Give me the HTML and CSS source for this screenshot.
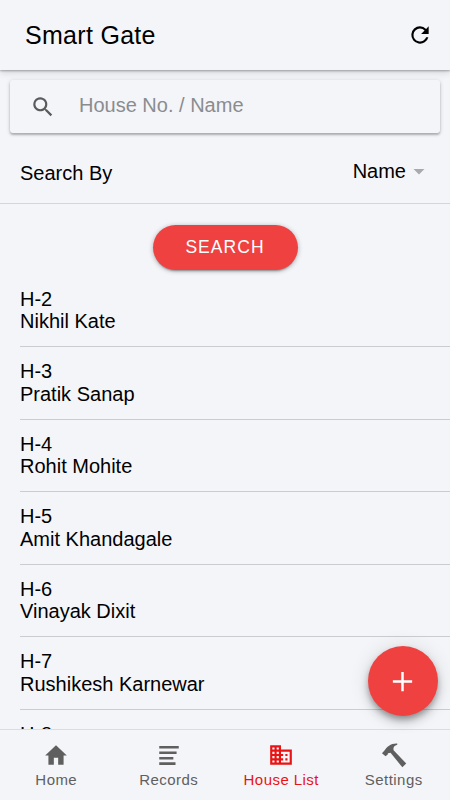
FILE: index.html
```html
<!DOCTYPE html>
<html lang="en">
<head>
  <meta charset="UTF-8">
  <meta name="viewport" content="width=device-width, initial-scale=1">
  <title>Smart Gate</title>
  <link rel="stylesheet" href="styles.css">
</head>
<body>
  <header class="toolbar">
    <h1 class="title">Smart Gate</h1>
    <button class="refresh" aria-label="Refresh">
      <svg viewBox="0 0 24 24"><path d="M17.65 6.35A7.95 7.95 0 0 0 12 4a8 8 0 1 0 7.73 10h-2.08A6 6 0 1 1 12 6c1.66 0 3.14.69 4.22 1.78L13 11h7V4z"/></svg>
    </button>
  </header>

  <main class="content">
    <div class="searchbar">
      <svg class="search-icon" viewBox="0 0 24 24"><path d="M15.5 14h-.79l-.28-.27A6.5 6.5 0 1 0 13.73 14.43l.27.28v.79l5 5L20.49 19zM9.5 14a4.5 4.5 0 1 1 0-9 4.5 4.5 0 0 1 0 9z"/></svg>
      <input class="search-input" type="text" placeholder="House No. / Name">
    </div>

    <div class="search-by">
      <span>Search By</span>
      <div class="select">Name<i class="arrow"></i></div>
    </div>

    <button class="search-btn">SEARCH</button>

    <ul class="house-list">
      <li>H-2<br>Nikhil Kate</li>
      <li>H-3<br>Pratik Sanap</li>
      <li>H-4<br>Rohit Mohite</li>
      <li>H-5<br>Amit Khandagale</li>
      <li>H-6<br>Vinayak Dixit</li>
      <li>H-7<br>Rushikesh Karnewar</li>
      <li>H-8</li>
    </ul>
  </main>

  <button class="fab" aria-label="Add house">
    <svg viewBox="0 0 24 24"><path d="M19 12.9h-6.1V19h-1.8v-6.1H5v-1.8h6.1V5h1.8v6.1H19z"/></svg>
  </button>

  <nav class="tabs">
    <a class="tab">
      <svg viewBox="0 0 24 24"><path d="M10 21v-6.5h4V21h5v-8.5h3L12 3 2 12.500h3V21z"/></svg>
      <span>Home</span>
    </a>
    <a class="tab">
      <svg viewBox="0 0 24 24"><path d="M3 3.600h18V6H3zM3 8.700h16V11.100H3zM3 13.800h13v2.400H3zM3 18.800h15v2.400H3z"/></svg>
      <span>Records</span>
    </a>
    <a class="tab active">
      <svg viewBox="0 0 24 24"><path d="M12 7V3H2v18h20V7H12zM6 19H4v-2h2v2zm0-4H4v-2h2v2zm0-4H4V9h2v2zm0-4H4V5h2v2zm4 12H8v-2h2v2zm0-4H8v-2h2v2zm0-4H8V9h2v2zm0-4H8V5h2v2zm10 12h-8v-2h2v-2h-2v-2h2v-2h-2V9h8v10zm-2-8h-2v2h2v-2zm0 4h-2v2h2v-2z"/></svg>
      <span>House List</span>
    </a>
    <a class="tab">
      <svg viewBox="0 0 24 24"><path d="M.9 10.400 3 8.100C5.500 4.200 9 1 15 1.300v1.200C12.200 3.300 11.100 4.800 11.600 7.500L23.300 19.900 19.700 23.300 8.800 10 6.400 10.300 6.200 11.500 4.200 13.200z"/></svg>
      <span>Settings</span>
    </a>
  </nav>
</body>
</html>
```
FILE: styles.css
```css
* {
  box-sizing: border-box;
}
body {
  margin: 0;
  height: 100vh;
  display: flex;
  flex-direction: column;
  overflow: hidden;
  background: #f4f5f9;
  color: #000;
  font-family: "Liberation Sans", Arial, sans-serif;
  font-size: 20px;
}
button {
  border: 0;
  padding: 0;
  font-family: inherit;
}
svg {
  display: block;
  fill: currentColor;
}

.toolbar {
  flex: none;
  display: flex;
  align-items: center;
  justify-content: space-between;
  height: 70px;
  padding: 0 17px 0 25px;
  background: #f4f5f9;
  box-shadow: 0 1px 2px rgba(0,0,0,0.3), 0 3px 7px rgba(0,0,0,0.12);
  z-index: 2;
}
.title {
  margin: 0;
  font-size: 25px;
  font-weight: normal;
  letter-spacing: 0.3px;
}
.refresh {
  background: none;
  color: #000;
}
.refresh svg {
  width: 26px;
  height: 26px;
}

.content {
  flex: 1;
  min-height: 0;
  overflow: hidden;
  display: flex;
  flex-direction: column;
}
.searchbar {
  flex: none;
  display: flex;
  align-items: center;
  height: 53px;
  margin: 10px 10px 0;
  padding-left: 20px;
  border-radius: 3px;
  box-shadow: 0 2px 2px rgba(0,0,0,0.2), 0 1px 4px rgba(0,0,0,0.18);
}
.search-icon {
  width: 26px;
  height: 26px;
  margin-right: 23px;
  color: #5b5b5b;
}
.search-input {
  flex: 1;
  min-width: 0;
  padding: 0 0 2px;
  border: 0;
  outline: 0;
  background: none;
  font: inherit;
}
.search-input::placeholder {
  color: #8b8c8e;
}
.search-by {
  flex: none;
  display: flex;
  justify-content: space-between;
  height: 70.5px;
  padding: 29px 25px 0 20px;
  border-bottom: 1px solid #d5d6da;
}
.select {
  display: flex;
  margin-top: -2.500px;
}
.arrow {
  margin: 9px 0 0 7px;
  width: 12px;
  height: 6px;
  background: #a9aaad;
  clip-path: polygon(0 0, 100% 0, 50% 100%);
}
.search-btn {
  flex: none;
  align-self: center;
  width: 145px;
  height: 45px;
  margin: 21.5px 0 4.5px;
  border-radius: 23px;
  background: #f04141;
  color: #fff;
  font-size: 17.5px;
  letter-spacing: 1.05px;
  box-shadow: 0 3px 2px -2px rgba(0,0,0,0.3), 0 1px 5px rgba(0,0,0,0.3);
}

.house-list {
  margin: 0;
  padding: 0 0 0 20px;
  list-style: none;
  line-height: 22.5px;
}
.house-list li {
  height: 72.5px;
  padding-top: 13px;
  border-bottom: 1px solid #cbccd0;
}

.fab {
  position: fixed;
  right: 12.5px;
  bottom: 84px;
  width: 70px;
  height: 70px;
  display: grid;
  place-items: center;
  border-radius: 50%;
  background: #f04141;
  color: #fff;
  box-shadow: 0 4px 6px -1px rgba(0,0,0,0.3), 0 6px 12px rgba(0,0,0,0.16), 0 1px 20px rgba(0,0,0,0.12);
}
.fab svg {
  width: 33px;
  height: 33px;
}

.tabs {
  flex: none;
  display: grid;
  grid-template-columns: repeat(4, 1fr);
  height: 71px;
  border-top: 1px solid #dbdce0;
}
.tab {
  display: flex;
  flex-direction: column;
  align-items: center;
  padding-top: 12px;
  gap: 3px;
  color: #5f5f5f;
  font-size: 15px;
  letter-spacing: 0.45px;
}
.tab svg {
  width: 26px;
  height: 26px;
}
.tab.active {
  color: #e91313;
}
```
